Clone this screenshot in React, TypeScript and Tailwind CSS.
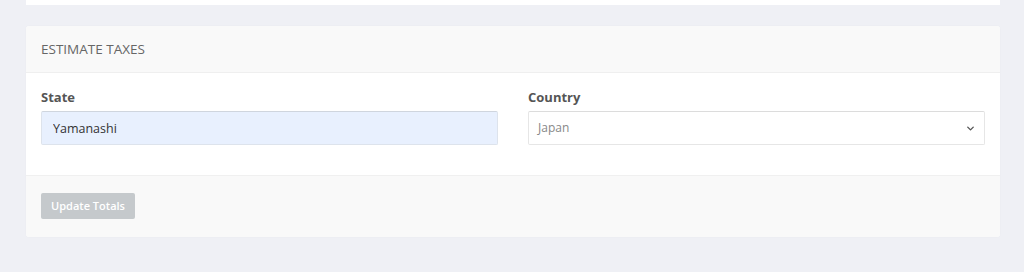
import { ChevronDown } from 'lucide-react'

const App = () => {
  return (
    <div className="w-[1024px] h-[272px] bg-[#eff0f5] font-['Open_Sans',sans-serif] overflow-hidden">
      {/* Previous panel edge */}
      <div className="ml-[26px] w-[974px] h-[5px] bg-white" />

      {/* Estimate Taxes panel */}
      <div className="mt-[21px] ml-[26px] w-[974px] rounded-[3px] bg-white shadow-[0_0_1px_rgba(0,0,0,0.08)]">
        <div className="h-[47px] px-[15px] flex items-center bg-[#f9f9f9] border-b border-[#efefef] rounded-t-[3px]">
          <h3 className="text-[13.5px] text-[#666] uppercase">Estimate Taxes</h3>
        </div>

        <div className="px-[15px] pt-[15px] pb-[30px] grid grid-cols-2 gap-[30px]">
          <div>
            <label className="block text-[13px] font-bold text-[#555] leading-[18px] mb-[5px]">State</label>
            <input
              readOnly
              value="Yamanashi"
              className="w-full h-[34px] px-[11px] bg-[#e8f0fe] border border-[#dde3ec] border-t-[#cfd5de] rounded-[2px] text-[12.5px] text-[#333] outline-none"
            />
          </div>
          <div>
            <label className="block text-[13px] font-bold text-[#555] leading-[18px] mb-[5px]">Country</label>
            <div className="relative h-[34px] flex items-center px-[9px] bg-white border border-[#e6e6e6] border-t-[#dcdcdc] rounded-[2px]">
              <span className="text-[12px] text-[#888]">Japan</span>
              <ChevronDown className="absolute right-[8px] w-[11px] h-[11px] text-[#555]" strokeWidth={3} />
            </div>
          </div>
        </div>

        <div className="h-[62px] px-[15px] pt-[16px] bg-[#f9f9f9] border-t border-[#f0f0f0] rounded-b-[3px]">
          <button className="h-[26px] w-[94px] bg-[#c5c9cc] rounded-[2px] text-[11px] font-semibold text-white">
            Update Totals
          </button>
        </div>
      </div>
    </div>
  )
}

export default App
